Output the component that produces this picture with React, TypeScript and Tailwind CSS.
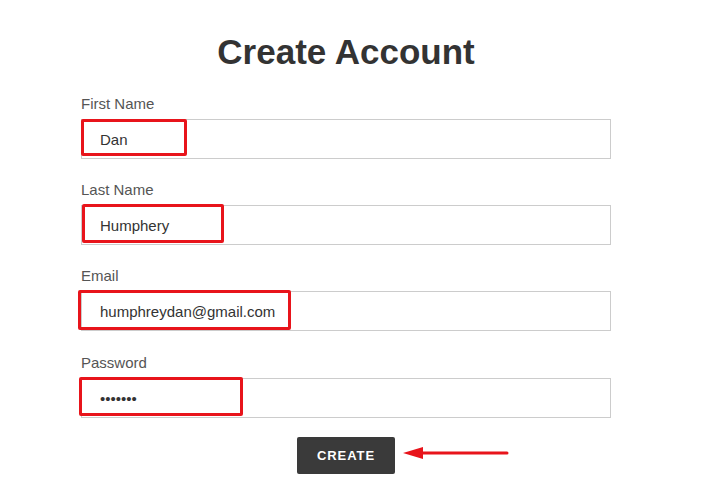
import React from 'react';

interface Field {
  label: string;
  value: string;
  type: string;
  // red highlight box, relative to the input
  box: { left: string; top: string; w: string; h: string };
}

const fields: Field[] = [
  { label: 'First Name', value: 'Dan', type: 'text', box: { left: 'left-0', top: 'top-0', w: 'w-[106px]', h: 'h-[37px]' } },
  { label: 'Last Name', value: 'Humphery', type: 'text', box: { left: 'left-[1px]', top: '-top-[1px]', w: 'w-[142px]', h: 'h-[39px]' } },
  { label: 'Email', value: 'humphreydan@gmail.com', type: 'email', box: { left: '-left-[3px]', top: '-top-[1px]', w: 'w-[213px]', h: 'h-[40px]' } },
  { label: 'Password', value: '1234567', type: 'password', box: { left: '-left-[2px]', top: '-top-[1px]', w: 'w-[164px]', h: 'h-[39px]' } },
];

export default function App() {
  return (
    <div className="w-[726px] h-[500px] bg-white overflow-hidden font-['Liberation_Sans',Arial,sans-serif]">
      <div className="ml-[81px] w-[530px] pt-[31px]">
        {/* Heading */}
        <h1 className="text-center text-[35px] leading-[41px] font-bold text-[#333333]">Create Account</h1>

        {/* Fields */}
        <div className="mt-[22px] flex flex-col gap-[21px]">
          {fields.map((f, i) => (
            <div key={f.label} className={`flex flex-col ${i === 3 ? 'mt-[1px]' : ''}`}>
              <label className="text-[15px] leading-[20px] text-[#555555]">{f.label}</label>
              <div className="relative mt-[5px]">
                <input
                  type={f.type}
                  value={f.value}
                  readOnly
                  className="w-full h-[40px] border border-[#cccccc] px-[18px] text-[15px] text-[#333333] outline-none bg-white"
                />
                <div
                  className={`absolute ${f.box.left} ${f.box.top} ${f.box.w} ${f.box.h} border-[3px] border-[#e8141b] rounded-[2px] pointer-events-none`}
                />
              </div>
            </div>
          ))}
        </div>

        {/* Submit */}
        <div className="mt-[19px] flex justify-center">
          <div className="relative">
            <button className="w-[98px] h-[37px] bg-[#3a3a3a] rounded-[2px] text-white text-[13px] font-bold tracking-[0.07em]">
              CREATE
            </button>
            <svg
              className="absolute left-[calc(100%+8px)] top-[9px]"
              width="106"
              height="14"
              viewBox="0 0 106 14"
            >
              <line x1="16" y1="7" x2="104" y2="7" stroke="#e8141b" strokeWidth="3" strokeLinecap="round" />
              <polygon points="0,7 20,1 20,13" fill="#e8141b" />
            </svg>
          </div>
        </div>
      </div>
    </div>
  );
}
